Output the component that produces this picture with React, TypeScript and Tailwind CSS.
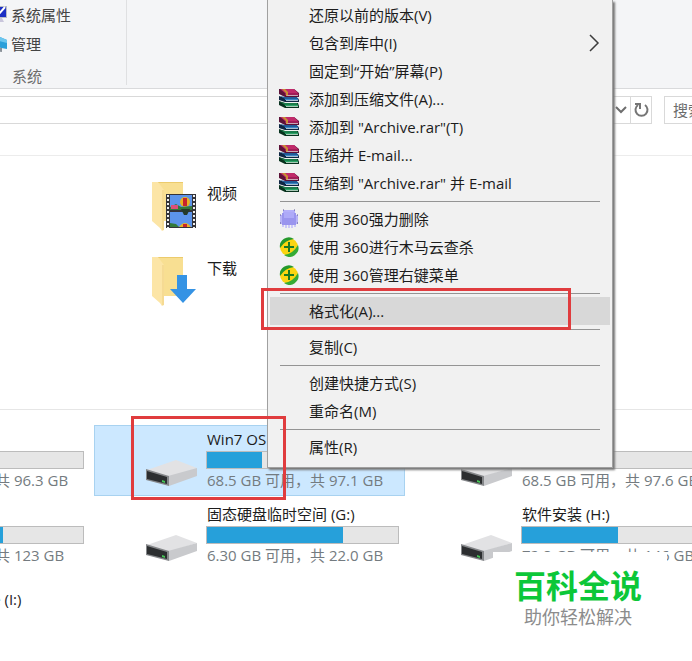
import type { ReactNode } from "react";
import clsx from "clsx";

function MonitorIcon() {
  return (
    <svg width="16" height="18" viewBox="0 0 16 18">
      <rect x="0" y="0" width="15" height="12" fill="#b9bdc6" />
      <rect x="0" y="1" width="14" height="10" fill="#1b2fc4" />
      <path d="M4 5l3 3 6-7" fill="none" stroke="#fff" strokeWidth="2" />
      <path d="M5 12h5l2 4H4z" fill="#c9c6dc" />
    </svg>
  );
}

function ManageIcon() {
  return (
    <svg width="16" height="18" viewBox="0 0 16 18">
      <path d="M3 0l12 5v9L3 12z" fill="#2b9fd9" />
      <path d="M3 0l12 5v3L3 5z" fill="#6cc6ee" />
      <path d="M3 12l7 1v4l-7-1z" fill="#8b9299" />
    </svg>
  );
}

function BookStackIcon() {
  return (
    <svg width="20" height="20" viewBox="0 0 20 20">
      <path d="M0 0h15l5 4v4H6L0 5z" fill="#5c1238" />
      <path d="M1 0h14l4 4H6z" fill="#c02a6a" />
      <path d="M6 4h13l1 2H6z" fill="#a11e58" />
      <path d="M7 6h12v1H7z" fill="#c9a9b6" />
      <path d="M3 0h3l3 3v3L7 7V4z" fill="#c99033" />
      <path d="M0 7l6 2h13l1 2v2H6l-6-2z" fill="#0e2643" />
      <path d="M1 7l5 1h12l1 2H6z" fill="#225c98" />
      <path d="M6 10h13v1H6z" fill="#3b86c4" />
      <path d="M7 11h12v1H7z" fill="#a9bfd0" />
      <path d="M0 12l6 2h13l1 3v2H6l-6-3z" fill="#08321e" />
      <path d="M1 13l5 1h12l1 2H6z" fill="#1b7d4b" />
      <path d="M6 16h13v1H6z" fill="#2ca367" />
      <path d="M7 17h12v1H7z" fill="#a9c9b6" />
    </svg>
  );
}

function ShredIcon() {
  return (
    <svg width="20" height="20" viewBox="0 0 20 20">
      <path d="M4 1h12v5H4z" fill="#b4b0fa" />
      <path d="M1 6h18v9H1z" fill="#b7b3f6" />
      <path d="M3 4h14v12H3z" fill="#9a95ee" />
      <path d="M5 3h10v6H5z" fill="#aeaaf8" />
      <path d="M4 16v2M7 16v3M10 16v3M13 16v3M16 16v2" stroke="#cac7f8" strokeWidth="2" />
      <path d="M4 1h1M15 1h1M1 6h1M18 6h1M1 14h1M18 14h1" stroke="#5a568f" strokeWidth="1" />
    </svg>
  );
}

function ShieldPlusIcon() {
  return (
    <svg width="20" height="20" viewBox="0 0 20 20">
      <circle cx="10" cy="10" r="9" fill="#fbd510" />
      <path d="M1 11A9 9 0 0 1 15 2Q6 3 1 11z" fill="#24992c" />
      <path d="M19 8A9 9 0 0 1 5 18Q14 17 19 8z" fill="#35ab35" />
      <path d="M10 5v10M5 10h10" stroke="#1c7a22" strokeWidth="2" />
    </svg>
  );
}

function FolderShape() {
  return (
    <>
      <path d="M6 1h25v39H6z" fill="#f8df92" />
      <path d="M6 1h25v1H6z" fill="#eccb6c" />
      <path d="M0 1h6l6 8v40l-2 1L8 47 0 40z" fill="#fce5a6" />
      <path d="M11 9v40" stroke="#efd081" strokeWidth="1" />
    </>
  );
}

function VideoFolderIcon() {
  return (
    <svg width="46" height="52" viewBox="0 0 46 52">
      <FolderShape />
      <rect x="14" y="13" width="30" height="34" fill="#34343a" />
      <rect x="18" y="14" width="22" height="15" fill="#5c94ea" />
      <rect x="18" y="31" width="22" height="15" fill="#5c94ea" />
      <path d="M16 14v33M42 14v33" stroke="#f1f1f1" strokeWidth="2" strokeDasharray="2 2" />
      <ellipse cx="33" cy="21" rx="5" ry="5" fill="#e8b321" />
      <path d="M31 17h4v8h-4z" fill="#c8242c" />
      <path d="M18 26l6-3 5 3 11-1v4H18z" fill="#327a3b" />
      <path d="M19 24h7v4h-7z" fill="#da4f79" />
      <path d="M29 28h9l-3 6h-3z" fill="#253a28" />
      <path d="M27 46q6-8 12 0z" fill="#e8b321" />
      <path d="M31 43h4v3h-4z" fill="#c8242c" />
      <path d="M18 42l6 1 3 3h-9z" fill="#327a3b" />
    </svg>
  );
}

function DownloadFolderIcon() {
  return (
    <svg width="46" height="52" viewBox="0 0 46 52">
      <FolderShape />
      <path d="M25 19h10v14h9L31 47 18 33h7z" fill="#3593e4" />
    </svg>
  );
}

function DriveIcon() {
  return (
    <svg width="53" height="28" viewBox="0 0 53 28">
      <path d="M1 11L30 1l21 8-29 9z" fill="#e2e2e4" />
      <path d="M22 17l29-8v8l-28 10z" fill="#c9cacd" />
      <path d="M0 10l23 7v10L0 21z" fill="#85878a" />
      <path d="M1 12l20 6v7L1 20z" fill="#2c2e30" />
      <path d="M16 21l3 1v2l-3-1z" fill="#45c455" />
    </svg>
  );
}

type MenuEntry = { label: string; icon?: ReactNode; submenu?: boolean; active?: boolean };

const menuGroups: MenuEntry[][] = [
  [
    { label: "还原以前的版本(V)" },
    { label: "包含到库中(I)", submenu: true },
    { label: "固定到“开始”屏幕(P)" },
    { label: "添加到压缩文件(A)...", icon: <BookStackIcon /> },
    { label: '添加到 "Archive.rar"(T)', icon: <BookStackIcon /> },
    { label: "压缩并 E-mail...", icon: <BookStackIcon /> },
    { label: '压缩到 "Archive.rar" 并 E-mail', icon: <BookStackIcon /> },
  ],
  [
    { label: "使用 360强力删除", icon: <ShredIcon /> },
    { label: "使用 360进行木马云查杀", icon: <ShieldPlusIcon /> },
    { label: "使用 360管理右键菜单", icon: <ShieldPlusIcon /> },
  ],
  [{ label: "格式化(A)...", active: true }],
  [{ label: "复制(C)" }],
  [{ label: "创建快捷方式(S)" }, { label: "重命名(M)" }],
  [{ label: "属性(R)" }],
];

function ContextMenu() {
  return (
    <div
      role="menu"
      className="absolute left-[267px] top-0 w-[346px] border-x border-b border-[#a0a0a0] bg-[#f1f1f1] px-[2px] pb-[6px] pt-px shadow-[2px_2px_2px_#777777]"
    >
      {menuGroups.map((group, index) => (
        <div key={index}>
          {index > 0 && (
            <div role="separator" className="flex h-2 items-center px-[10px]">
              <div className="h-px w-full bg-[#949494]" />
            </div>
          )}
          {group.map((entry) => (
            <button
              key={entry.label}
              type="button"
              role="menuitem"
              className={clsx("flex h-7 w-full items-center gap-[10px] px-[9px] text-left", entry.active && "bg-[#d8d8d8]")}
            >
              <span className="w-5 shrink-0">{entry.icon}</span>
              <span className="flex-1 whitespace-nowrap">{entry.label}</span>
              {entry.submenu && (
                <svg width="12" height="18" viewBox="0 0 12 18">
                  <path d="M1 1l8 8-8 8" fill="none" stroke="#3c3c3c" strokeWidth="1.500" />
                </svg>
              )}
            </button>
          ))}
        </div>
      ))}
    </div>
  );
}

type Drive = { name: string; space: string; used: number; selected?: boolean };

const drives: Drive[] = [
  { name: "系统 (C:)", space: "75.2 GB 可用，共 96.3 GB", used: 22 },
  { name: "Win7 OS (D:)", space: "68.5 GB 可用，共 97.1 GB", used: 29, selected: true },
  { name: "文档 (E:)", space: "68.5 GB 可用，共 97.6 GB", used: 30 },
  { name: "娱乐 (F:)", space: "51.1 GB 可用，共 123 GB", used: 58 },
  { name: "固态硬盘临时空间 (G:)", space: "6.30 GB 可用，共 22.0 GB", used: 71 },
  { name: "软件安装 (H:)", space: "72.8 GB 可用，共 146 GB", used: 50 },
];

function DriveTile({ name, space, used, selected }: Drive) {
  return (
    <div className={clsx("flex h-[71px] border pl-[51px]", selected ? "border-[#a8d2f0] bg-[#cce8ff]" : "border-transparent")}>
      <div className="w-[60px] shrink-0 pt-[33px]">
        <DriveIcon />
      </div>
      <div className="w-[193px] whitespace-nowrap pt-[3px]">
        <div className="h-[22px] pl-px leading-5">{name}</div>
        <div className="h-[18px] border border-[#bcbcbc] bg-[#e6e6e6]">
          <div className="h-full bg-[#26a0da]" style={{ width: `${used}%` }} />
        </div>
        <div className="pl-px leading-[22px] text-[#747b80]">{space}</div>
      </div>
    </div>
  );
}

function FolderTile({ name, icon }: { name: string; icon: ReactNode }) {
  return (
    <div className="col-start-2 flex h-[71px] gap-[9px] pl-[58px] pt-[11px]">
      {icon}
      <div className="leading-6">{name}</div>
    </div>
  );
}

export default function App() {
  return (
    <div
      lang="zh-CN"
      className="relative min-h-screen overflow-hidden bg-white font-['Open_Sans','Noto_Sans_CJK_SC',sans-serif] text-[15px] text-[#1c1c1c]"
    >
      <header className="flex h-[89px] border-b border-[#d9dadc] bg-[#f4f5f7] text-[#444444]">
        <div className="mb-[3px] w-[127px] border-r border-[#dfe0e2]">
          <button type="button" className="-ml-2 flex h-[30px] items-center gap-[3px]">
            <MonitorIcon />
            系统属性
          </button>
          <button type="button" className="-ml-2 flex h-7 items-center gap-[3px]">
            <ManageIcon />
            管理
          </button>
          <div className="pl-3 pt-2 leading-5 text-[#6c6c6c]">系统</div>
        </div>
      </header>

      <div className="flex h-[67px] gap-3 border-b border-[#ececec] pt-[7px]">
        <div className="flex h-7 flex-1 border border-l-0 border-[#d9d9d9]">
          <input aria-label="地址" className="min-w-0 flex-1 outline-none" />
          <button type="button" aria-label="展开" className="flex w-5 items-center justify-center border-r border-[#d9d9d9]">
            <svg width="12" height="8" viewBox="0 0 12 8">
              <path d="M1 1l5 5 5-5" fill="none" stroke="#6e6e6e" strokeWidth="2" />
            </svg>
          </button>
          <button type="button" aria-label="刷新" className="flex w-5 items-center justify-center">
            <svg width="16" height="16" viewBox="0 0 16 16">
              <path d="M12 3A6 6 0 1 1 5 3" fill="none" stroke="#757575" strokeWidth="2" />
              <path d="M2 2h5v5" fill="none" stroke="#757575" strokeWidth="2" />
            </svg>
          </button>
        </div>
        <input
          aria-label="搜索"
          placeholder="搜索"
          className="h-7 w-7 border border-r-0 border-[#d9d9d9] pl-2 outline-none placeholder:text-[#6c6c6c]"
        />
      </div>

      <main>
        <section className="h-[254px] border-b border-[#e6e6e6] pt-[14px]">
          <div className="-ml-[221px] grid w-max grid-cols-[repeat(3,311px)] gap-1">
            <FolderTile name="视频" icon={<VideoFolderIcon />} />
            <FolderTile name="下载" icon={<DownloadFolderIcon />} />
          </div>
        </section>
        <section className="-ml-[221px] grid w-max grid-cols-[repeat(3,311px)] gap-1 pt-[15px]">
          {drives.map((drive) => (
            <DriveTile key={drive.name} {...drive} />
          ))}
          <div className="h-[71px] whitespace-nowrap pl-[111px] pt-[14px] leading-5">DVD-ROM Drive (I:)</div>
        </section>
      </main>

      <ContextMenu />

      <div className="absolute left-[261px] top-[288px] h-[42px] w-[310px] border-3 border-[#e03c3e]" />
      <div className="absolute left-[131px] top-[416px] h-[84px] w-[155px] border-3 border-[#e03c3e]" />

      <div className="absolute left-[493px] top-[552px] w-[174px] bg-white pb-3 pr-1 pt-4 text-center">
        <div className="text-[32px] font-bold leading-9 text-[#0cc738]">百科全说</div>
        <div className="text-[18px] leading-[26px] text-[#8c8c8c]">助你轻松解决</div>
      </div>
    </div>
  );
}
